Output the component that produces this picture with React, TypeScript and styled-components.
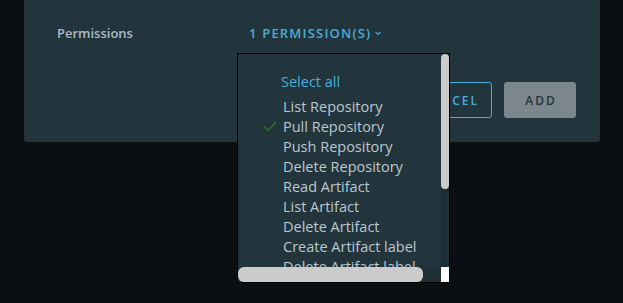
import { createGlobalStyle } from 'styled-components';
import styled from 'styled-components';

const GlobalStyle = createGlobalStyle`
    html, body {
        margin: 0;
        padding: 0;
        background: #0b0f12;
        font-family: "Open Sans", "Liberation Sans", sans-serif;
    }
`;

const permissions = [
    'List Repository',
    'Pull Repository',
    'Push Repository',
    'Delete Repository',
    'Read Artifact',
    'List Artifact',
    'Delete Artifact',
    'Create Artifact label',
    'Delete Artifact label',
    'Create Tag',
    'Delete Tag',
    'List Tag',
    'Create Scan',
    'Stop Scan'
];

const selected = ['Pull Repository'];

const Page = styled.div`
    width: 623px;
    height: 303px;
    padding-left: 24px;
    box-sizing: border-box;
`;

const Card = styled.div`
    width: 576px;
    height: 142px;
    background: #22343c;
    border-radius: 0 0 3px 3px;
    padding: 24px 24px 0 33px;
    box-sizing: border-box;
`;

const FormRow = styled.div`
    display: flex;
    align-items: center;
    height: 17px;
`;

const Label = styled.div`
    width: 192px;
    font-size: 13px;
    font-weight: 600;
    color: #adbbc4;
`;

const Trigger = styled.div`
    position: relative;
    display: flex;
    align-items: center;
    gap: 3px;
    font-size: 13px;
    font-weight: 600;
    letter-spacing: 1.2px;
    color: #49afd9;
    cursor: pointer;
`;

const Chevron = styled.svg`
    width: 8px;
    height: 8px;
    margin-top: 1px;
`;

// the open dropdown, with its scrollbars drawn as grid cells
const Menu = styled.div`
    position: absolute;
    top: 29px;
    left: -12px;
    width: 213px;
    height: 230px;
    box-sizing: border-box;
    background: #22343c;
    border: 1px solid #000;
    display: grid;
    grid-template-columns: 1fr 8px;
    grid-template-rows: 1fr 15px;
    letter-spacing: normal;
    font-weight: 400;
    z-index: 2;
`;

const Viewport = styled.div`
    overflow: hidden;
`;

const MenuInner = styled.div`
    width: 223px;
    padding: 16px 0 8px;
`;

const Track = styled.div<{ $dir: 'v' | 'h' }>`
    background: #1f2f36;
    display: flex;
    flex-direction: ${(p) => (p.$dir === 'v' ? 'column' : 'row')};
`;

const Thumb = styled.div<{ $dir: 'v' | 'h' }>`
    background: #cbcbcb;
    border-radius: ${(p) => (p.$dir === 'v' ? '4px' : '6px')};
    ${(p) => (p.$dir === 'v' ? 'height: 135px;' : 'width: 185px;')}
`;

const Corner = styled.div`
    background: #ffffff;
`;

const SelectAll = styled.div`
    height: 24px;
    line-height: 24px;
    padding-left: 43px;
    margin-bottom: 3px;
    font-size: 14.5px;
    color: #49afd9;
`;

const Option = styled.div`
    display: flex;
    align-items: center;
    height: 20px;
    font-size: 14.5px;
    color: #bcc8cf;
    white-space: nowrap;
`;

const CheckSlot = styled.div`
    width: 45px;
    display: flex;
    justify-content: flex-end;
    padding-right: 6px;
    box-sizing: border-box;
`;

const Actions = styled.div`
    display: flex;
    justify-content: flex-end;
    gap: 12px;
    margin-top: 41px;
`;

const Button = styled.button<{ $variant: 'outline' | 'solid' }>`
    height: 36px;
    min-width: 72px;
    padding: 0 12px 0 14px;
    border-radius: 3px;
    font-family: "Open Sans", "Liberation Sans", sans-serif;
    font-size: 12px;
    font-weight: 600;
    letter-spacing: 2px;
    border: 1px solid ${(p) => (p.$variant === 'outline' ? '#49afd9' : '#7b878d')};
    background: ${(p) => (p.$variant === 'outline' ? 'transparent' : '#7b878d')};
    color: ${(p) => (p.$variant === 'outline' ? '#49afd9' : '#27333a')};
`;

const App = () => {
    return (
        <>
            <GlobalStyle />
            <Page>
                <Card>
                    <FormRow>
                        <Label>Permissions</Label>
                        <Trigger>
                            1 PERMISSION(S)
                            <Chevron viewBox="0 0 8 8">
                                <path d="M1.5 3 L4 5.5 L6.5 3" fill="none" stroke="#49afd9" strokeWidth="1.1" />
                            </Chevron>
                            <Menu>
                                <Viewport>
                                    <MenuInner>
                                        <SelectAll>Select all</SelectAll>
                                        {permissions.map((name) => (
                                            <Option key={name}>
                                                <CheckSlot>
                                                    {selected.includes(name) && (
                                                        <svg width="14" height="11" viewBox="0 0 14 11">
                                                            <path d="M1 5.5 L5 9.5 L13 1" fill="none" stroke="#2f7d1c" strokeWidth="1.2" />
                                                        </svg>
                                                    )}
                                                </CheckSlot>
                                                {name}
                                            </Option>
                                        ))}
                                    </MenuInner>
                                </Viewport>
                                <Track $dir="v">
                                    <Thumb $dir="v" />
                                </Track>
                                <Track $dir="h">
                                    <Thumb $dir="h" />
                                </Track>
                                <Corner />
                            </Menu>
                        </Trigger>
                    </FormRow>
                    <Actions>
                        <Button $variant="outline">CANCEL</Button>
                        <Button $variant="solid">ADD</Button>
                    </Actions>
                </Card>
            </Page>
        </>
    );
};

export default App;
